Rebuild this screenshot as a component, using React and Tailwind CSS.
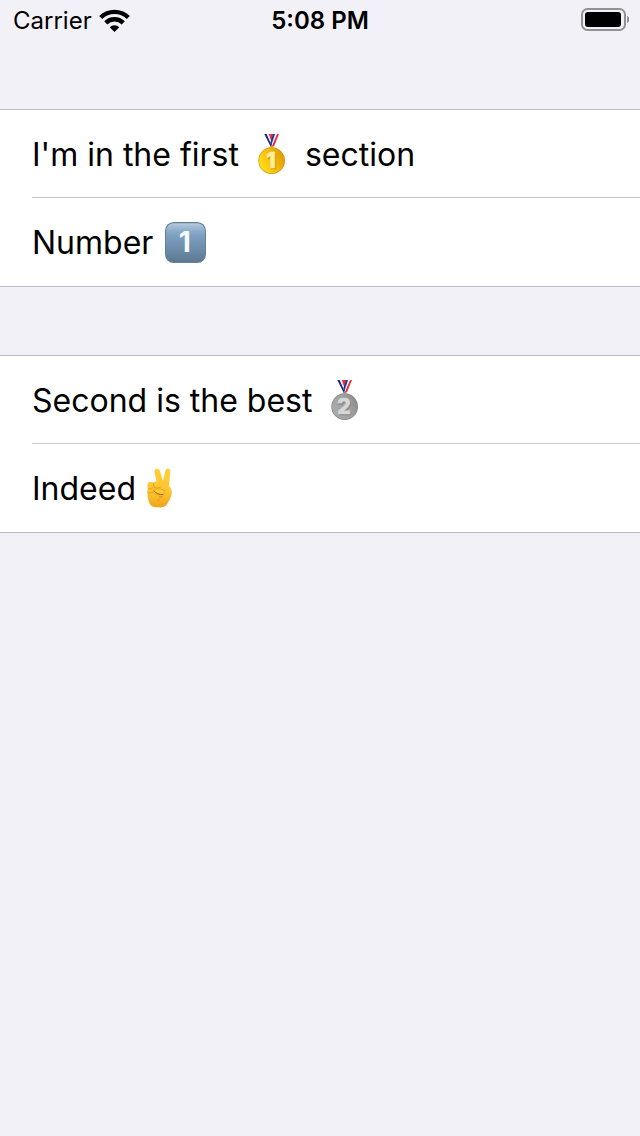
import React from "react";

function Medal({ label, digit, rim, light, mid, dark, ink, id }) {
  return (
    <svg role="img" aria-label={label} viewBox="15 24 126 126" className="size-[42px] shrink-0">
      <defs>
        <linearGradient id={id} x1="0.1" y1="0.7" x2="1" y2="0.3">
          <stop offset="0" stopColor={light} />
          <stop offset="0.55" stopColor={mid} />
          <stop offset="1" stopColor={dark} />
        </linearGradient>
      </defs>
      <path d="M92 27h7L84 64h-7z" fill="#f02a32" />
      <path d="M87 27h6L78 62l-4-5z" fill="#f3f4fb" />
      <path d="M73 27h9L76 48l-5-9z" fill="#ee3038" />
      <path d="M55 27h8l15 32-4 6z" fill="#17257f" />
      <path d="M62 27h6l11 26-3 6z" fill="#f0f2fb" />
      <path d="M68 27h5l6 14-2 10z" fill="#e0353f" />
      <path d="M81 27h6L76 61l-3-8z" fill="#1b34a0" />
      <path d="M73 62h8l2 5H71z" fill={rim} />
      <circle cx="77" cy="107" r="40" fill={rim} />
      <circle cx="77" cy="107" r="38" fill={`url(#${id})`} />
      <text x="77" y="132" textAnchor="middle" fontFamily="Inter, sans-serif" fontWeight="900" fontSize="63" fill={rim} stroke={rim} strokeWidth="2">{digit}</text>
      <text x="75" y="130" textAnchor="middle" fontFamily="Inter, sans-serif" fontWeight="900" fontSize="63" fill={ink} stroke={ink} strokeWidth="1">{digit}</text>
    </svg>
  );
}

function GoldMedal() {
  return <Medal id="gold" label="First place medal" digit="1" rim="#d1930a" light="#ffdb16" mid="#f5b80c" dark="#dc9a08" ink="#ffef9c" />;
}

function SilverMedal() {
  return <Medal id="silver" label="Second place medal" digit="2" rim="#858585" light="#a9a9a9" mid="#a2a2a2" dark="#8b8b8b" ink="#d6d6d6" />;
}

function KeycapOne() {
  return (
    <svg role="img" aria-label="Keycap one" viewBox="33 27 126 126" className="size-[42px] shrink-0">
      <defs>
        <linearGradient id="keycap" x1="0" y1="0" x2="0" y2="1">
          <stop offset="0" stopColor="#b5cbdc" />
          <stop offset="0.2" stopColor="#8aabc9" />
          <stop offset="0.32" stopColor="#7d9fc2" />
          <stop offset="0.65" stopColor="#6e8cab" />
          <stop offset="1" stopColor="#5d7890" />
        </linearGradient>
      </defs>
      <rect x="33" y="30" width="123" height="123" rx="26" fill="#648099" />
      <rect x="36" y="34" width="117" height="116" rx="23" fill="url(#keycap)" />
      <text x="92" y="121" textAnchor="middle" fontFamily="Inter, sans-serif" fontWeight="700" fontSize="84" fill="#f7fbff">1</text>
    </svg>
  );
}

function VictoryHand() {
  return (
    <svg role="img" aria-label="Victory hand" viewBox="24 21 126 126" className="size-[42px] shrink-0">
      <defs>
        <linearGradient id="skin" x1="0" y1="0" x2="0" y2="1">
          <stop offset="0" stopColor="#ffce3a" />
          <stop offset="0.6" stopColor="#fdc52f" />
          <stop offset="1" stopColor="#eda51b" />
        </linearGradient>
      </defs>
      <path
        d="M70 35c-1-10 14-12 17-2l9 30 7-31c3-9 16-7 15 2l-4 45c7 5 10 14 8 24-2 12-9 21-13 28-5 9-14 12-28 11-14 0-22-3-26-13-3-8-6-19-6-31 0-6 0-10 2-14-4-9-1-18 6-18 5-1 9 0 11 3 2-4 5-5 9-4z"
        fill="url(#skin)"
      />
      <path d="M52 86c5 2 10 1 14-3M67 69l3 13M71 82c5 3 12 3 17-1M51 96c5 4 10 4 15 1" fill="none" stroke="#d99a24" strokeWidth="2.5" strokeLinecap="round" />
      <path d="M84 109c4 0 7 0 10 1-7 3-12 7-13 14" fill="none" stroke="#dc981f" strokeWidth="2.5" strokeLinecap="round" />
      <path d="M67 91c5-5 19-5 29-2 6 2 4 11 0 14-7 2-17 1-24-1-6-2-8-7-5-11z" fill="#ffcb36" stroke="#de9c24" strokeWidth="2" />
      <path d="M69 93c6 7 16 11 27 11" fill="none" stroke="#a86412" strokeWidth="3" strokeLinecap="round" />
    </svg>
  );
}

function WifiIcon() {
  return (
    <svg role="img" aria-label="Wi-Fi" viewBox="298 26 92 68" className="h-[23px] w-[31px]">
      <path d="M303 51a59 59 0 0 1 82 0" fill="none" stroke="#000" strokeWidth="13" />
      <path d="M318 67a37 37 0 0 1 52 0" fill="none" stroke="#000" strokeWidth="13" />
      <path d="M330 80a20 20 0 0 1 28 0l-14 14z" fill="#000" />
    </svg>
  );
}

function BatteryIcon() {
  return (
    <svg role="img" aria-label="Battery full" viewBox="0 0 48 24" className="h-6 w-12">
      <rect x="1" y="1" width="43" height="21" rx="5.500" fill="none" stroke="#929295" strokeWidth="2" />
      <rect x="4" y="4" width="36" height="15" rx="3" fill="#000" />
      <path d="M46 8c3 1 3 6 0 7z" fill="#929295" />
    </svg>
  );
}

function Section({ children }) {
  return <ul className="border-y border-[#bcbbc1] bg-white pl-8">{children}</ul>;
}

function Row({ children }) {
  return (
    <li className="flex min-h-[88px] items-center gap-[3px] border-b border-[#c8c7cc] text-[32px] leading-10 whitespace-pre last:border-b-0 [&>span]:pt-0.5">
      {children}
    </li>
  );
}

export default function App() {
  return (
    <div className="min-h-screen bg-[#f2f1f7] font-['Inter',sans-serif] text-black">
      <header className="grid h-10 grid-cols-3 items-center text-[24px] leading-7">
        <div className="flex items-center gap-[7px] pl-[13px]">
          <span className="pt-0.5">Carrier</span>
          <WifiIcon />
        </div>
        <time className="pt-0.5 text-center font-semibold">5:08 PM</time>
        <div className="flex justify-end pr-[11px]">
          <BatteryIcon />
        </div>
      </header>
      <main className="flex flex-col gap-[68px] pt-[69px]">
        <Section>
          <Row>
            <span>I'm in the first </span>
            <GoldMedal />
            <span> section</span>
          </Row>
          <Row>
            <span>Number </span>
            <KeycapOne />
          </Row>
        </Section>
        <Section>
          <Row>
            <span>Second is the best </span>
            <SilverMedal />
          </Row>
          <Row>
            <span>Indeed</span>
            <VictoryHand />
          </Row>
        </Section>
      </main>
    </div>
  );
}
